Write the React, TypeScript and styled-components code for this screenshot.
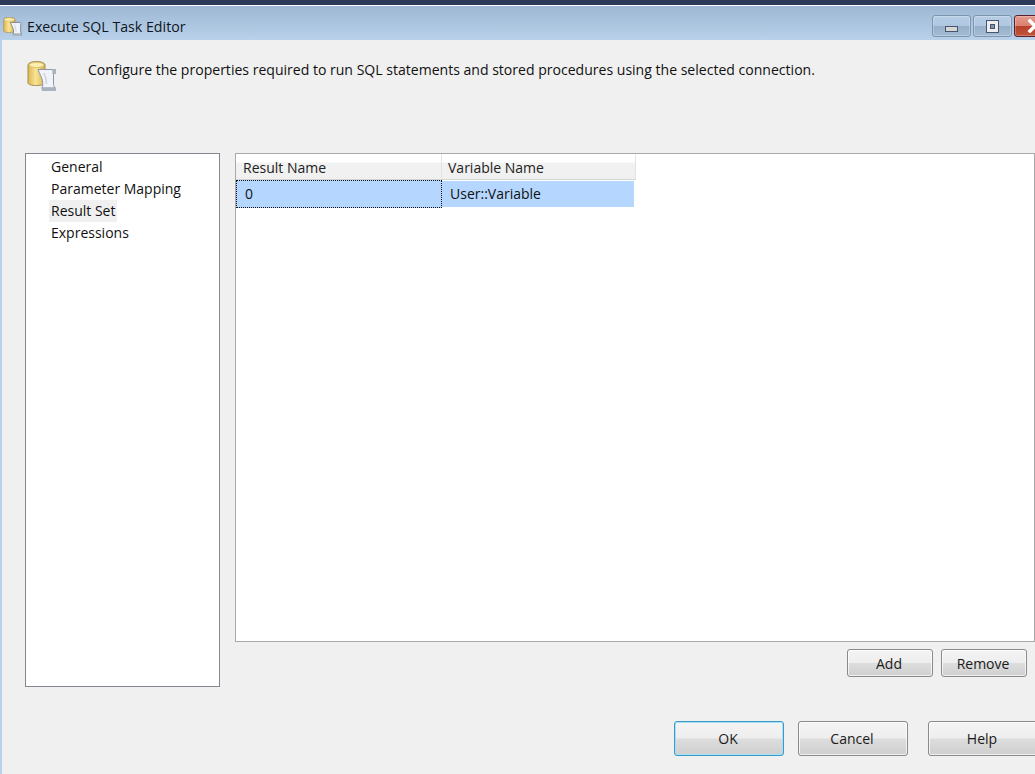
import React from 'react';
import styled, { createGlobalStyle } from 'styled-components';

const GlobalStyle = createGlobalStyle`
  html, body {
    margin: 0;
    padding: 0;
    width: 1035px;
    height: 774px;
    overflow: hidden;
    background: #f0f0f0;
  }
`;

const Screen = styled.div`
  width: 1035px;
  height: 774px;
  overflow: hidden;
  display: flex;
  flex-direction: column;
  font-family: 'Open Sans', 'Noto Sans', sans-serif;
  font-size: 14px;
  color: #111111;
`;

const TopStrip = styled.div`
  height: 5px;
  flex: none;
  background: #2a3a58;
  border-bottom: 1px solid #ffffff;
`;

const TitleBar = styled.div`
  height: 34px;
  flex: none;
  box-sizing: border-box;
  display: flex;
  align-items: center;
  padding: 6px 0 0 3px;
  gap: 4px;
  background: linear-gradient(#9db7d4, #b9d1ea);
`;

const TitleText = styled.span`
  font-size: 14.2px;
  color: #10161e;
  white-space: nowrap;
  flex: 1;
`;

const WindowButtons = styled.div`
  display: flex;
  gap: 2px;
  align-self: flex-start;
  margin-top: 3px;
  margin-right: -39px;
`;

const CaptionButton = styled.div<{ $close?: boolean; $width: number }>`
  width: ${(p) => p.$width}px;
  height: 22px;
  box-sizing: border-box;
  display: flex;
  align-items: center;
  justify-content: ${(p) => (p.$close ? 'flex-start' : 'center')};
  padding-left: ${(p) => (p.$close ? 12 : 0)}px;
  border: 1px solid ${(p) => (p.$close ? '#5a2030' : '#7f94ad')};
  border-radius: 3px;
  background: ${(p) =>
    p.$close
      ? 'linear-gradient(#e59a8c 0%, #d9806f 50%, #b8402a 52%, #c0543c 100%)'
      : 'linear-gradient(#b6cde6 0%, #aec6e0 50%, #97afc9 52%, #a4bcd6 100%)'};
  box-shadow: inset 0 0 0 1px rgba(255, 255, 255, 0.25);
`;

const Body = styled.div`
  flex: 1;
  display: flex;
  flex-direction: column;
  min-height: 0;
  background: #f0f0f0;
  border-left: 2px solid #b9d1ea;
`;

const Header = styled.div`
  height: 113px;
  flex: none;
  box-sizing: border-box;
  display: flex;
  align-items: flex-start;
  padding: 21px 0 0 25px;
`;

const HeaderText = styled.p`
  margin: -1px 0 0 31px;
  font-size: 14.05px;
  line-height: 20px;
  white-space: nowrap;
`;

const Main = styled.div`
  display: flex;
  gap: 15px;
  padding-left: 23px;
  height: 534px;
  flex: none;
`;

const NavPanel = styled.nav`
  width: 195px;
  flex: none;
  box-sizing: border-box;
  background: #ffffff;
  border: 1px solid #828790;
  padding: 2px 0 0 23px;
  display: flex;
  flex-direction: column;
  align-items: flex-start;
`;

const NavItem = styled.div<{ $selected?: boolean }>`
  height: 22px;
  line-height: 22px;
  padding: 0 2px;
  background: ${(p) => (p.$selected ? '#f0f0f0' : 'transparent')};
  white-space: nowrap;
`;

const RightColumn = styled.div`
  flex: 1;
  display: flex;
  flex-direction: column;
  min-width: 0;
`;

const GridPanel = styled.div`
  height: 489px;
  flex: none;
  box-sizing: border-box;
  background: #ffffff;
  border: 1px solid #a9a9a9;
`;

const GridHeader = styled.div`
  display: flex;
  height: 26px;
  box-sizing: border-box;
  width: 400px;
  background: linear-gradient(#ffffff 0, #ffffff 8px, #f2f2f2 9px, #f0f0f0 100%);
  border-bottom: 1px solid #d5d5d5;
`;

const HeaderCell = styled.div<{ $width: number; $inset: number }>`
  width: ${(p) => p.$width}px;
  box-sizing: border-box;
  padding: 3px 0 0 ${(p) => p.$inset}px;
  line-height: 21px;
  border-right: 1px solid #e3e3e3;
  color: #222222;
  white-space: nowrap;
`;

const GridRow = styled.div`
  display: flex;
  align-items: center;
  height: 28px;
  width: 398px;
`;

const FocusedCell = styled.div`
  width: 206px;
  height: 28px;
  flex: none;
  box-sizing: border-box;
  background: #b5d7ff;
  line-height: 26px;
  padding-left: 8px;
  border: 1px dotted #111111;
  white-space: nowrap;
`;

const RowCell = styled.div`
  flex: 1;
  height: 26px;
  box-sizing: border-box;
  background: #b5d7ff;
  line-height: 25px;
  padding-left: 8px;
  white-space: nowrap;
`;

const GridActions = styled.div`
  display: flex;
  justify-content: flex-end;
  gap: 8px;
  padding: 7px 8px 0 0;
`;

const Footer = styled.div`
  display: flex;
  gap: 14px;
  padding: 34px 0 0 672px;
`;

const Button = styled.div<{ $default?: boolean; $small?: boolean; $gapLeft?: number }>`
  width: ${(p) => (p.$small ? 86 : 110)}px;
  height: ${(p) => (p.$small ? 28 : 35)}px;
  flex: none;
  margin-left: ${(p) => p.$gapLeft ?? 0}px;
  padding-right: 2px;
  box-sizing: border-box;
  display: flex;
  align-items: center;
  justify-content: center;
  border: 1px solid ${(p) => (p.$default ? '#3a9ac8' : '#8a8a8a')};
  border-radius: 3px;
  background: linear-gradient(#f4f4f4 0%, #eeeeee 48%, #dddddd 52%, #cfcfcf 100%);
  box-shadow: inset 0 0 0 1px ${(p) => (p.$default ? '#a6e0f5' : 'rgba(255, 255, 255, 0.7)')};
  color: #1a1a1a;
`;

const TaskIcon = ({ width, height, outline }: { width: number; height: number; outline: string }) => {
  const gradientId = `can${width}`;
  return (
    <svg width={width} height={height} viewBox="0 0 30 30" preserveAspectRatio="none" style={{ flex: 'none' }}>
      <defs>
        <linearGradient id={gradientId} x1="0" x2="1" y1="0" y2="0">
          <stop offset="0" stopColor="#dcb650" />
          <stop offset="0.45" stopColor="#f8e596" />
          <stop offset="1" stopColor="#d9b24a" />
        </linearGradient>
      </defs>
      <path
        d="M1 4c0-2 3.500-3.500 8.500-3.500S18 2 18 4v18c0 1.500-3.500 2.500-8.500 2.500S1 23.500 1 22z"
        fill={`url(#${gradientId})`}
        stroke="#a58c55"
      />
      <ellipse cx="9.500" cy="4" rx="7.500" ry="2.600" fill="#fbeeae" stroke="#d2b45f" strokeWidth="0.700" />
      <path
        d="M11 8.500h15.500V22c0 2 .5 3.500 1.500 5H15c.8-1.500 1-4 .5-7-.6-3.500-3-7.500-4.500-11.500z"
        fill="#f1f3f8"
        stroke={outline}
      />
      <path d="M25 8h4v5h-3.500zM14 26.500h15V30H15z" fill="#a9b3c2" />
      <path d="M17 12c1.500 3 2.500 7 2.500 11" stroke="#cdd4de" strokeWidth="1.500" fill="none" />
    </svg>
  );
};

const App = () => {
  return (
    <Screen>
      <GlobalStyle />
      <TopStrip />
      <TitleBar>
        <TaskIcon width={20} height={19} outline="#4f5a6a" />
        <TitleText>Execute SQL Task Editor</TitleText>
        <WindowButtons>
          <CaptionButton $width={39}>
            <svg width="13" height="6" viewBox="0 0 13 6" style={{ marginTop: 6 }}>
              <rect x="0.500" y="0.500" width="12" height="5" fill="#d6d6d6" stroke="#47566b" />
            </svg>
          </CaptionButton>
          <CaptionButton $width={39}>
            <svg width="13" height="13" viewBox="0 0 13 13">
              <rect x="0.500" y="0.500" width="12" height="12" fill="#eeeeee" stroke="#47566b" />
              <rect x="4.500" y="4.500" width="4" height="4" fill="#7f94ad" stroke="#47566b" />
            </svg>
          </CaptionButton>
          <CaptionButton $close $width={60}>
            <svg width="16" height="14" viewBox="0 0 16 14">
              <path d="M3 2l10 10M13 2L3 12" stroke="#ffffff" strokeWidth="3.500" strokeLinecap="square" />
            </svg>
          </CaptionButton>
        </WindowButtons>
      </TitleBar>
      <Body>
        <Header>
          <TaskIcon width={30} height={30} outline="#8e98a6" />
          <HeaderText>
            Configure the properties required to run SQL statements and stored procedures using the
            selected connection.
          </HeaderText>
        </Header>
        <Main>
          <NavPanel>
            <NavItem>General</NavItem>
            <NavItem>Parameter Mapping</NavItem>
            <NavItem $selected>Result Set</NavItem>
            <NavItem>Expressions</NavItem>
          </NavPanel>
          <RightColumn>
            <GridPanel>
              <GridHeader>
                <HeaderCell $width={206} $inset={7}>Result Name</HeaderCell>
                <HeaderCell $width={194} $inset={6}>Variable Name</HeaderCell>
              </GridHeader>
              <GridRow>
                <FocusedCell>0</FocusedCell>
                <RowCell>User::Variable</RowCell>
              </GridRow>
            </GridPanel>
            <GridActions>
              <Button $small>Add</Button>
              <Button $small>Remove</Button>
            </GridActions>
          </RightColumn>
        </Main>
        <Footer>
          <Button $default>OK</Button>
          <Button>Cancel</Button>
          <Button $gapLeft={6}>Help</Button>
        </Footer>
      </Body>
    </Screen>
  );
};

export default App;
